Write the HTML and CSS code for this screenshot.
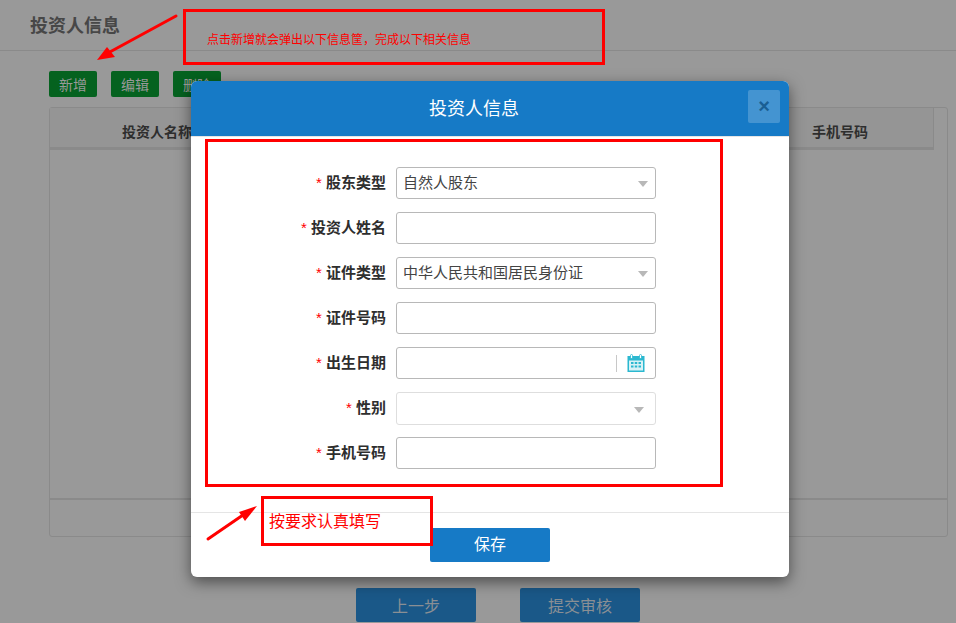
FILE: index.html
```html
<!DOCTYPE html>
<html lang="zh-CN">
<head>
    <meta charset="UTF-8">
    <title>投资人信息</title>
    <link rel="stylesheet" href="styles.css">
</head>
<body>

    <div class="page-head">
        <h2>投资人信息</h2>
    </div>

    <div class="toolbar">
        <button class="btn-green">新增</button>
        <button class="btn-green">编辑</button>
        <button class="btn-green">删除</button>
    </div>

    <div class="table-box">
        <div class="table-head">
            <div class="col-first">投资人名称</div>
            <div class="col-last">手机号码</div>
        </div>
        <div class="table-body"></div>
        <div class="table-foot"></div>
    </div>

    <div class="actions">
        <button class="btn-blue">上一步</button>
        <button class="btn-blue">提交审核</button>
    </div>

    <div class="modal">
        <div class="modal-head">
            <h3>投资人信息</h3>
            <button class="modal-close">×</button>
        </div>

        <div class="form-box">
            <div class="form-row">
                <label><span class="star">*</span> 股东类型</label>
                <div class="field select">自然人股东</div>
            </div>
            <div class="form-row">
                <label><span class="star">*</span> 投资人姓名</label>
                <input class="field" type="text">
            </div>
            <div class="form-row">
                <label><span class="star">*</span> 证件类型</label>
                <div class="field select">中华人民共和国居民身份证</div>
            </div>
            <div class="form-row">
                <label><span class="star">*</span> 证件号码</label>
                <input class="field" type="text">
            </div>
            <div class="form-row">
                <label><span class="star">*</span> 出生日期</label>
                <div class="field date">
                    <span class="date-line"></span>
                    <svg class="date-icon" width="18" height="18" viewBox="0 0 18 18">
                        <rect x="0.5" y="2" width="17" height="16" fill="#2bb8d0"/>
                        <rect x="2" y="6.5" width="14" height="10" fill="#d8f2f6"/>
                        <rect x="3.5" y="0.5" width="2" height="4" rx="1" fill="#fff" stroke="#2bb8d0" stroke-width="0.8"/>
                        <rect x="12.5" y="0.5" width="2" height="4" rx="1" fill="#fff" stroke="#2bb8d0" stroke-width="0.8"/>
                        <path d="M4 8h2.5v2H4zM7.75 8h2.5v2h-2.5zM11.5 8H14v2h-2.5zM4 11.5h2.5v2H4zM7.75 11.5h2.5v2h-2.5zM11.5 11.5H14v2h-2.5z" fill="#2bb8d0"/>
                    </svg>
                </div>
            </div>
            <div class="form-row">
                <label><span class="star">*</span> 性别</label>
                <div class="field select light"></div>
            </div>
            <div class="form-row">
                <label><span class="star">*</span> 手机号码</label>
                <input class="field" type="text">
            </div>
        </div>

        <div class="modal-foot">
            <button class="btn-save">保存</button>
        </div>
    </div>

    <!-- red notes drawn over the screenshot -->
    <div class="note note-top">点击新增就会弹出以下信息筐，完成以下相关信息</div>
    <div class="note note-bottom">按要求认真填写</div>
    <svg class="arrows" width="956" height="623" viewBox="0 0 956 623">
        <path d="M176 16L108 53" stroke="#f00" stroke-width="3" stroke-linecap="round"/>
        <polygon points="97,60 107,47 115,57" fill="#f00"/>
        <path d="M208 539L243 515" stroke="#f00" stroke-width="3" stroke-linecap="round"/>
        <polygon points="257,506 239,512 245,521" fill="#f00"/>
    </svg>

</body>
</html>
```

FILE: styles.css
```css
* {
    box-sizing: border-box;
}
body {
    margin: 0;
    height: 623px;
    overflow: hidden;
    position: relative;
    background-color: #999;
    font-family: "Liberation Sans", "Noto Sans CJK SC", sans-serif;
    font-size: 14px;
    color: #2e2e2e;
}
button {
    font-family: inherit;
    border: none;
    padding: 0;
}
.page-head {
    height: 51px;
    border-bottom: 1px solid #8a8a8a;
    padding-left: 30px;
}
.page-head h2 {
    margin: 0;
    font-size: 18px;
    line-height: 52px;
    color: #474747;
}
.toolbar {
    display: flex;
    gap: 14px;
    padding: 20px 0 0 49px;
}
.btn-green {
    width: 48px;
    height: 26px;
    border-radius: 2px;
    background-color: #05621f;
    color: #999;
    font-size: 14px;
}
.table-box {
    width: 899px;
    height: 430px;
    margin: 10px 0 0 49px;
    border: 1px solid #8a8a8a;
    border-radius: 3px;
    display: flex;
    flex-direction: column;
}
.table-head {
    width: 884px;
    height: 42px;
    padding-top: 6px;
    display: flex;
    justify-content: space-between;
    align-items: center;
    text-align: center;
    font-weight: bold;
    background-color: #959595;
    border-right: 1px solid #8a8a8a;
    border-bottom: 3px solid #8a8a8a;
}
.col-first {
    width: 214px;
}
.col-last {
    width: 186px;
}
.table-body {
    flex: 1;
}
.table-foot {
    height: 38px;
    border-top: 2px solid #8a8a8a;
}
.actions {
    display: flex;
    gap: 44px;
    margin-top: 51px;
    padding-left: 356px;
}
.btn-blue {
    width: 120px;
    height: 34px;
    border-radius: 2px;
    background-color: #1a5888;
    color: #8a8f94;
    font-size: 16px;
}
.modal {
    position: absolute;
    top: 81px;
    left: 191px;
    width: 598px;
    height: 496px;
    background-color: #fff;
    border-radius: 6px;
    box-shadow: 0 5px 15px rgba(0, 0, 0, 0.5);
    overflow: hidden;
}
.modal-head {
    height: 56px;
    padding: 9px 9px 0 9px;
    display: flex;
    align-items: flex-start;
    background-color: #167ac6;
    border-bottom: 1px solid #e5e5e5;
}
.modal-head h3 {
    flex: 1;
    margin: 0;
    font-size: 18px;
    font-weight: normal;
    line-height: 38px;
    text-align: center;
    color: #fff;
}
.modal-close {
    width: 32px;
    height: 33px;
    border-radius: 2px;
    background-color: rgba(255, 255, 255, 0.2);
    color: #1a5f94;
    font-size: 20px;
    font-weight: bold;
    line-height: 33px;
}
.form-box {
    width: 518px;
    height: 348px;
    margin: 2px 0 0 14px;
    padding-top: 25px;
    border: 3px solid #f00;
    display: flex;
    flex-direction: column;
    gap: 13px;
}
.form-row {
    display: flex;
    align-items: center;
    gap: 10px;
    height: 32px;
}
.form-row label {
    width: 178px;
    text-align: right;
    font-size: 15px;
    font-weight: bold;
    line-height: 30px;
}
.star {
    color: #f00;
    font-weight: normal;
}
.field {
    width: 260px;
    height: 32px;
    border: 1px solid #b8b8b8;
    border-radius: 3px;
    background-color: #fff;
    padding: 0 6px;
    line-height: 30px;
    font-family: inherit;
    font-size: 15px;
    color: #444;
}
.select {
    position: relative;
}
.select::after {
    content: "";
    position: absolute;
    top: 13px;
    right: 7px;
    border-top: 6px solid #b8b8b8;
    border-left: 5px solid transparent;
    border-right: 5px solid transparent;
}
.light {
    height: 33px;
    border-color: #dedede;
}
.light::after {
    top: 14px;
    right: 11px;
}
.date {
    display: flex;
    align-items: center;
    justify-content: flex-end;
    gap: 10px;
    padding-right: 10px;
}
.date-line {
    width: 1px;
    height: 17px;
    background-color: #c8c8c8;
}
.modal-foot {
    margin-top: 25px;
    height: 65px;
    padding-top: 15px;
    border-top: 1px solid #e5e5e5;
    text-align: center;
}
.btn-save {
    width: 120px;
    height: 34px;
    border-radius: 2px;
    background-color: #167ac6;
    color: #fff;
    font-size: 16px;
    line-height: 34px;
}
.note {
    position: absolute;
    border: 3px solid #f00;
    color: #f00;
}
.note-top {
    top: 9px;
    left: 183px;
    width: 422px;
    height: 56px;
    padding: 20px 0 0 21px;
    font-size: 12px;
    line-height: 17px;
}
.note-bottom {
    top: 496px;
    left: 261px;
    width: 172px;
    height: 50px;
    padding: 13px 0 0 5px;
    font-size: 16px;
    line-height: 20px;
}
.arrows {
    position: absolute;
    top: 0;
    left: 0;
    pointer-events: none;
}
```
